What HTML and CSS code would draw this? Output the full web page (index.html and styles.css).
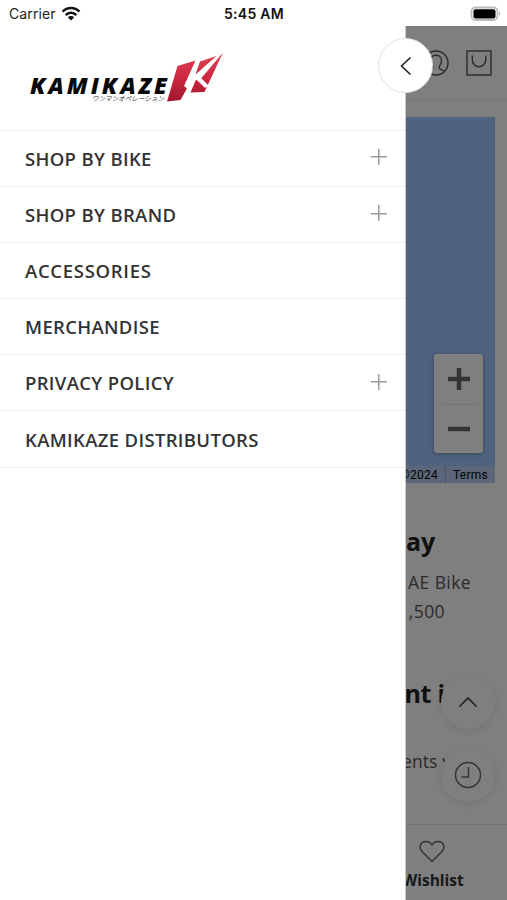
FILE: index.html
```html
<!DOCTYPE html>
<html lang="en">
<head>
<meta charset="utf-8">
<title>Kamikaze</title>
<link rel="stylesheet" href="styles.css">
</head>
<body>
<div class="status">
  <div class="carrier">Carrier
    <svg width="20" height="16" viewBox="0 0 20 16" fill="none" stroke="#111" stroke-width="2.5"><path d="M1.6 5.6C6.3.8 13.7.8 18.4 5.6M4.7 9c3-3 7.6-3 10.6 0"/><path d="M6.8 11.3c1.8-1.7 4.6-1.7 6.4 0L10 14.5z" fill="#111" stroke="none"/></svg>
  </div>
  <div class="time">5:45 AM</div>
  <svg class="battery" width="32" height="16" viewBox="0 0 32 16"><rect x="1.5" y="1.5" width="26" height="12.5" rx="4" fill="#fff" stroke="#bbb" stroke-width="1.8"/><rect x="3.5" y="3.2" width="22" height="9.2" rx="2" fill="#000"/><path d="M29.2 5.5q2 2.3 0 4.6z" fill="#aaa"/></svg>
</div>
<div class="app">
  <main class="page">
    <header class="topbar">
      <svg width="26" height="26" viewBox="0 0 26 26" fill="none" stroke="#555" stroke-width="1.4"><circle cx="13" cy="13" r="12"/><path d="M4.500 21.500c1.500-2 5.500-1.500 5.500-4 0-2-2.500-3-2.500-7 0-7 11-7 11 0 0 4-2.300 5-2.300 7 0 2.500 4 2 5.500 4"/></svg>
      <svg width="26" height="26" viewBox="0 0 26 26" fill="none" stroke="#555" stroke-width="1.4"><rect x="1" y="1" width="24" height="24"/><path d="M6.300 5.500v4.500a6.700 6.700 0 0 0 13.400 0V5.500"/></svg>
    </header>
    <section class="map">
      <div class="zoomer"><svg width="24" height="24" viewBox="0 0 24 24" stroke="#666" stroke-width="4.500"><path d="M1 12h22M12 1v22"/></svg><i class="rule"></i><svg width="24" height="24" viewBox="0 0 24 24" stroke="#666" stroke-width="4.500"><path d="M1 12h22"/></svg></div>
      <div class="credits"><span class="copy">©2024</span><span class="terms">Terms</span></div>
    </section>
    <section class="copytext">
      <h2 class="title first">way</h2>
      <p class="body one">AE Bike</p>
      <p class="body two">,500</p>
      <h2 class="title second">nt i</h2>
      <p class="body three">ents v</p>
    </section>
    <nav class="tabs">
      <svg width="26" height="24" viewBox="0 0 26 24" fill="none" stroke="#666" stroke-width="1.5" stroke-linejoin="round"><path d="M13 22.500 3 12.500C-1 7.500 2 2.500 7 2.500c3 0 5 1.500 6 3.500 1-2 3-3.500 6-3.500 5 0 8 5 4 10z"/></svg>
      <span>Wishlist</span>
    </nav>
  </main>
  <div class="floaters">
    <div class="round"><svg width="20" height="12" viewBox="0 0 20 12" fill="none" stroke="#444" stroke-width="1.600"><path d="m1.500 10.500 8.500-8.500 8.500 8.500"/></svg></div>
    <div class="round"><svg width="28" height="28" viewBox="0 0 28 28" fill="none" stroke="#666" stroke-width="1.500"><circle cx="14" cy="14" r="12.500"/><path d="M14.500 6v10H7.500"/></svg></div>
  </div>
  <div class="overlay"></div>
  <aside class="drawer">
    <div class="brand">
      <svg width="200" height="56" viewBox="26 50 200 56">
        <defs><linearGradient id="red" gradientUnits="userSpaceOnUse" x1="0" y1="54" x2="0" y2="102"><stop offset="0" stop-color="#d94454"/><stop offset=".5" stop-color="#cf2740"/><stop offset="1" stop-color="#9e1630"/></linearGradient></defs>
        <text class="word" x="30" y="93.500" textLength="137">KAMIKAZE</text>
        <text class="kana" x="92" y="100.500" textLength="72" lengthAdjust="spacingAndGlyphs">ワンマンオペレーション</text>
        <g fill="url(#red)">
          <path d="M177.500 66 195.500 60.500 184 86 187 88.500 180.500 100 167 101.500z"/>
          <path d="M200 61.500 216.500 56 195.500 74.500z"/>
          <path d="M223 52.500 201 78.500 206 86 196 79.500 190.500 92.500 204.500 92z"/>
        </g>
        <path fill="#fff" d="M196 79 200 77 208.500 85.500 205 88z"/>
      </svg>
    </div>
    <ul class="menu">
      <li><span>SHOP BY BIKE</span><i class="plus"></i></li>
      <li><span>SHOP BY BRAND</span><i class="plus"></i></li>
      <li><span class="acc">ACCESSORIES</span></li>
      <li><span>MERCHANDISE</span></li>
      <li><span>PRIVACY POLICY</span><i class="plus"></i></li>
      <li><span>KAMIKAZE DISTRIBUTORS</span></li>
    </ul>
    <div class="close"><svg width="14" height="20" viewBox="0 0 14 20" fill="none" stroke="#222" stroke-width="1.600"><path d="m11.500 1.500-9 8.500 9 8.500"/></svg></div>
  </aside>
</div>
</body>
</html>
```
FILE: styles.css
```css
* { box-sizing: border-box; }
body { margin: 0; width: 507px; height: 900px; overflow: hidden; background: #fff; font-family: "Open Sans", "Noto Sans", sans-serif; color: #333; }
h2, p, ul { margin: 0; padding: 0; }
svg { display: block; flex: none; }
.status { height: 26px; display: grid; grid-template-columns: 1fr auto 1fr; align-items: center; padding: 1px 5px 0 9px; font-family: Inter, sans-serif; font-size: 14px; color: #222; }
.carrier { display: flex; align-items: center; gap: 5px; letter-spacing: .1px; }
.time { font-weight: 600; letter-spacing: .3px; padding-right: 3px; color: #111; }
.battery { justify-self: end; }
.app { position: relative; height: 874px; display: grid; grid-template: 874px / 507px; overflow: hidden; }
.page, .overlay, .drawer { grid-area: 1 / 1; }
.page { display: flex; flex-direction: column; background: #fff; }
.topbar { height: 74px; border-bottom: 1px solid #eee; display: flex; justify-content: flex-end; align-items: center; gap: 17px; padding-right: 15px; }
.map { margin: 17px 12px 0; height: 366px; background: #9ec4fc; display: flex; flex-direction: column; justify-content: space-between; align-items: flex-end; }
.zoomer { margin: 237px 12px 0 0; width: 49px; height: 99px; background: #fff; border-radius: 3px; box-shadow: 0 1px 4px rgba(0,0,0,.3); display: flex; flex-direction: column; align-items: center; justify-content: space-between; padding: 13px 0 12px; }
.rule { width: 36px; height: 1px; background: #e8e8e8; }
.credits { display: flex; height: 17px; font: 12px/18px Roboto, sans-serif; color: #000; letter-spacing: .25px; background: #b9cdf0; }
.copy { padding: 0 7px; border-right: 1px solid #8fa7d0; }
.terms { padding: 0 7px; }
.copytext { flex: 1; text-align: right; }
.title { font-size: 25px; line-height: 34px; font-weight: 700; color: #222; letter-spacing: -.2px; }
.body { font-size: 17.500px; line-height: 29px; color: #555; letter-spacing: .4px; }
.first { margin: 41px 72px 0 0; }
.one { margin: 10px 36px 0 0; }
.two { margin-right: 62px; }
.second { margin: 50px 62px 0 0; }
.three { margin: 37px 56px 0 0; letter-spacing: .1px; }
.tabs { height: 76px; border-top: 1px solid #e8e8e8; padding: 14px 0 0 359px; display: flex; flex-direction: column; align-items: center; font-size: 15.500px; font-weight: 700; line-height: 22px; color: #333; }
.tabs svg { margin-right: 3px; }
.tabs span { margin-top: 6px; }
.floaters { position: absolute; right: 12px; top: 649px; display: grid; gap: 19px; }
.round { width: 54px; height: 54px; border-radius: 50%; background: #fff; box-shadow: 0 2px 10px rgba(0,0,0,.09); display: grid; place-items: center; }
.overlay { background: rgba(0,0,0,.5); position: relative; }
.drawer { position: relative; width: 406px; background: #fff; border-right: 1px solid #ccc; }
.brand { height: 103.500px; padding: 24px 0 0 26px; }
.word { font: italic 800 23px "Open Sans", sans-serif; fill: #080808; }
.kana { font: italic 6.500px "Noto Sans CJK JP", sans-serif; fill: #333; }
.menu { list-style: none; border-bottom: 1px solid #eee; }
.menu li { height: 56.200px; border-top: 1px solid #eee; padding: 0 18px 0 25px; display: flex; align-items: center; justify-content: space-between; font-size: 18.500px; font-weight: 600; white-space: nowrap; letter-spacing: .33px; }
.menu .acc { letter-spacing: .7px; }
.plus { width: 16px; height: 16px; margin-top: -2px; background: linear-gradient(#999,#999) center / 100% 1.500px no-repeat, linear-gradient(#999,#999) center / 1.500px 100% no-repeat; }
.close { position: absolute; left: 378px; top: 12px; width: 55px; height: 55px; border: 1px solid #e2e2e2; border-radius: 50%; background: #fff; display: grid; place-items: center; }
```
